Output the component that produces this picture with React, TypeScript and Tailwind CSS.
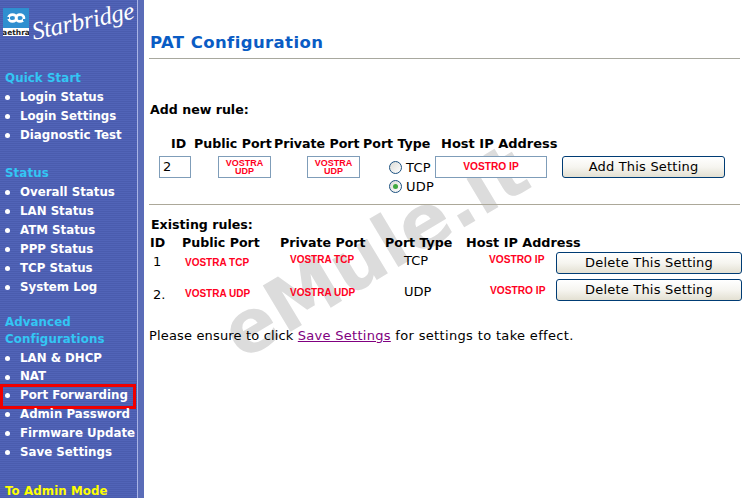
const DV = "font-['DejaVu_Sans',sans-serif]";

function Section({ title, items, className }: { title: React.ReactNode; items: string[]; className: string }) {
  return (
    <div className={className}>
      <div className="text-[#33c6f4] text-[11.8px] font-bold leading-[17px] tracking-[0.1px]">{title}</div>
      <ul className="mt-[1px]">
        {items.map((t) => (
          <li key={t} className={`relative flex items-center ${t === "NAT" ? "h-[18px]" : "h-[19px]"} text-white text-[11.8px] font-bold whitespace-nowrap`}>
            <span className="w-[5px] h-[5px] mr-[10px] rounded-full bg-white shrink-0" />
            {t}
            {t === "Port Forwarding" && (
              <span className="absolute left-[-5px] top-[-2px] w-[136px] h-[25px] border-[3px] border-[#f00000]" />
            )}
          </li>
        ))}
      </ul>
    </div>
  );
}

function Red({ children, className = "" }: { children: React.ReactNode; className?: string }) {
  return <span className={`font-['Liberation_Sans',sans-serif] text-[#ff0022] font-bold text-center ${className}`}>{children}</span>;
}

function Box({ className, children }: { className: string; children?: React.ReactNode }) {
  return <div className={`h-[22px] border border-[#7f9db9] bg-white flex items-center justify-center ${className}`}>{children}</div>;
}

function Radio({ checked }: { checked?: boolean }) {
  return (
    <span className="w-[13px] h-[13px] rounded-full border border-[#1c5180] bg-gradient-to-br from-[#dcdcd7] to-white flex items-center justify-center shrink-0">
      {checked && <span className="w-[5px] h-[5px] rounded-full bg-[#3fa83f]" />}
    </span>
  );
}

function Btn({ children, className }: { children: React.ReactNode; className: string }) {
  return (
    <button className={`h-[22px] rounded-[3px] border border-[#003c74] bg-gradient-to-b from-white via-[#f6f5f0] to-[#e3e0d2] text-[13px] leading-[18px] text-black tracking-[0.2px] ${className}`}>
      {children}
    </button>
  );
}

const head = "font-bold leading-[16px] text-[12.6px] whitespace-nowrap";
const cell = "block !text-left text-[10px] leading-[10px] whitespace-nowrap";

export default function App() {
  return (
    <div className={`${DV} relative w-[746px] h-[498px] overflow-hidden bg-white flex text-black`}>
      <aside className="relative w-[144px] h-full shrink-0 bg-[#4e60b4] bg-[repeating-linear-gradient(180deg,#5164b8_0px,#5164b8_1px,#4a5cae_1px,#4a5cae_2px)] border-r-[6px] border-r-[#5a6cb8]">
        <div className="absolute right-0 top-0 h-full w-[1px] bg-[#a9b4e6]" />
        <div className="flex items-start h-[36px] pt-[8px] pl-[3px]">
          <svg width="26" height="28" viewBox="0 0 26 28" className="shrink-0">
            <rect width="26" height="28" fill="#fff" />
            <rect width="26" height="20" fill="#2f8fd0" />
            <ellipse cx="9.5" cy="10" rx="4" ry="3.4" fill="none" stroke="#fff" strokeWidth="2.6" />
            <ellipse cx="17" cy="10" rx="4" ry="3.4" fill="none" stroke="#fff" strokeWidth="2.6" />
            <rect x="3" y="9" width="3" height="2" fill="#2f8fd0" />
            <rect x="20" y="11" width="3" height="2" fill="#2f8fd0" />
            <text x="13" y="27" textAnchor="middle" fontSize="7.5" fontWeight="700" fill="#222" fontFamily="DejaVu Sans">aethra</text>
          </svg>
          <span className="ml-[3px] mt-[10px] text-white italic text-[25px] leading-[28px] font-['Liberation_Serif',serif] -rotate-[12deg] origin-left tracking-[-0.3px] whitespace-nowrap">
            Starbridge
          </span>
        </div>
        <Section className="mt-[34px] pl-[5px]" title="Quick Start" items={["Login Status", "Login Settings", "Diagnostic Test"]} />
        <Section className="mt-[20px] pl-[5px]" title="Status" items={["Overall Status", "LAN Status", "ATM Status", "PPP Status", "TCP Status", "System Log"]} />
        <Section
          className="mt-[17px] pl-[5px]"
          title={<>Advanced<br />Configurations</>}
          items={["LAN & DHCP", "NAT", "Port Forwarding", "Admin Password", "Firmware Update", "Save Settings"]}
        />
        <div className="mt-[21px] pl-[5px] text-[#ffff00] text-[11.8px] font-bold leading-[17px] tracking-[0.1px]">To Admin Mode</div>
      </aside>

      <main className="relative flex-1 min-w-0 pl-[5px] pr-[6px]">
        <div aria-hidden className="absolute left-[60px] top-[214px] -rotate-[31deg] text-[#dcdcdc] text-[74px] leading-[74px] font-bold whitespace-nowrap">
          eMule.it
        </div>
        <div className="relative">
          <h1 className="pt-[33px] pl-[1px] h-[58px] text-[#0a5cc4] text-[16.5px] leading-[20px] font-bold tracking-[0.4px]">PAT Configuration</h1>
          <div className="h-[1px] bg-[#a8a89e]" />

          <div className="mt-[43px] pl-[1px] text-[12.6px] leading-[16px] font-bold">Add new rule:</div>

          <div className="mt-[18px] grid grid-cols-[45px_80px_89px_72px_127px_163px] text-[13px]">
            <div className={`${head} pl-[22px]`}>ID</div>
            <div className={head}>Public Port</div>
            <div className={head}>Private Port</div>
            <div className={head}>Port Type</div>
            <div className={`${head} !text-[13px] pl-[6px]`}>Host IP Address</div>
            <div />
            <div className="mt-[4px] pl-[10px]">
              <Box className="w-[32px] !justify-start pl-[3px]">2</Box>
            </div>
            <div className="mt-[4px] pl-[24px]">
              <Box className="w-[53px]"><Red className="text-[9px] leading-[8px]">VOSTRA<br />UDP</Red></Box>
            </div>
            <div className="mt-[4px] pl-[33px]">
              <Box className="w-[53px]"><Red className="text-[9px] leading-[8px]">VOSTRA<br />UDP</Red></Box>
            </div>
            <div className="mt-[6px] pl-[26px] flex flex-col tracking-[0.2px]">
              <label className="flex items-center gap-[4px] h-[19px] leading-[19px]"><Radio />TCP</label>
              <label className="flex items-center gap-[4px] h-[19px] leading-[19px]"><Radio checked />UDP</label>
            </div>
            <div className="mt-[4px]">
              <Box className="w-[112px]"><Red className="text-[10.2px] leading-[10px]">VOSTRO IP</Red></Box>
            </div>
            <div className="mt-[4px]">
              <Btn className="w-[163px]">Add This Setting</Btn>
            </div>
          </div>

          <div className="mt-[8px] h-[1px] bg-[#aca899]" />

          <div className="mt-[12px] pl-[2px] text-[12.6px] leading-[16px] font-bold">Existing rules:</div>

          <div className="mt-[2px] grid grid-cols-[32px_98px_105px_81px_90px_186px] text-[13px] pl-[1px]">
            <div className={head}>ID</div>
            <div className={head}>Public Port</div>
            <div className={head}>Private Port</div>
            <div className={head}>Port Type</div>
            <div className={`${head} !text-[12.8px] col-span-2`}>Host IP Address</div>
          </div>
          <div className="grid grid-cols-[32px_98px_105px_81px_90px_186px] auto-rows-[27px] text-[13px] pl-[1px]">
            <div className="pl-[3px] pt-[1px]">1</div>
            <div className="pl-[3px] pt-[7px]"><Red className={cell}>VOSTRA TCP</Red></div>
            <div className="pl-[10px] pt-[4px]"><Red className={cell}>VOSTRA TCP</Red></div>
            <div className="pl-[19px] leading-[19px]">TCP</div>
            <div className="pl-[23px] pt-[4px]"><Red className={`${cell} !text-[10.2px]`}>VOSTRO IP</Red></div>
            <div className="pt-[1px]"><Btn className="w-[186px]">Delete This Setting</Btn></div>

            <div className="pl-[3px] pt-[7px]">2.</div>
            <div className="pl-[3px] pt-[11px]"><Red className={cell}>VOSTRA UDP</Red></div>
            <div className="pl-[10px] pt-[10px]"><Red className={cell}>VOSTRA UDP</Red></div>
            <div className="pl-[19px] pt-[4px]">UDP</div>
            <div className="pl-[24px] pt-[8px]"><Red className={`${cell} !text-[10.2px]`}>VOSTRO IP</Red></div>
            <div className="pt-[1px]"><Btn className="w-[186px]">Delete This Setting</Btn></div>
          </div>

          <p className="mt-[23px] text-[13px] leading-[16px] whitespace-nowrap">
            <span className="tracking-[0.16px]">Please ensure to click </span>
            <a className="text-[#800080] underline tracking-[0.28px]">Save Settings</a>
            <span className="tracking-[0.34px]"> for settings to take effect.</span>
          </p>
        </div>
      </main>
    </div>
  );
}
